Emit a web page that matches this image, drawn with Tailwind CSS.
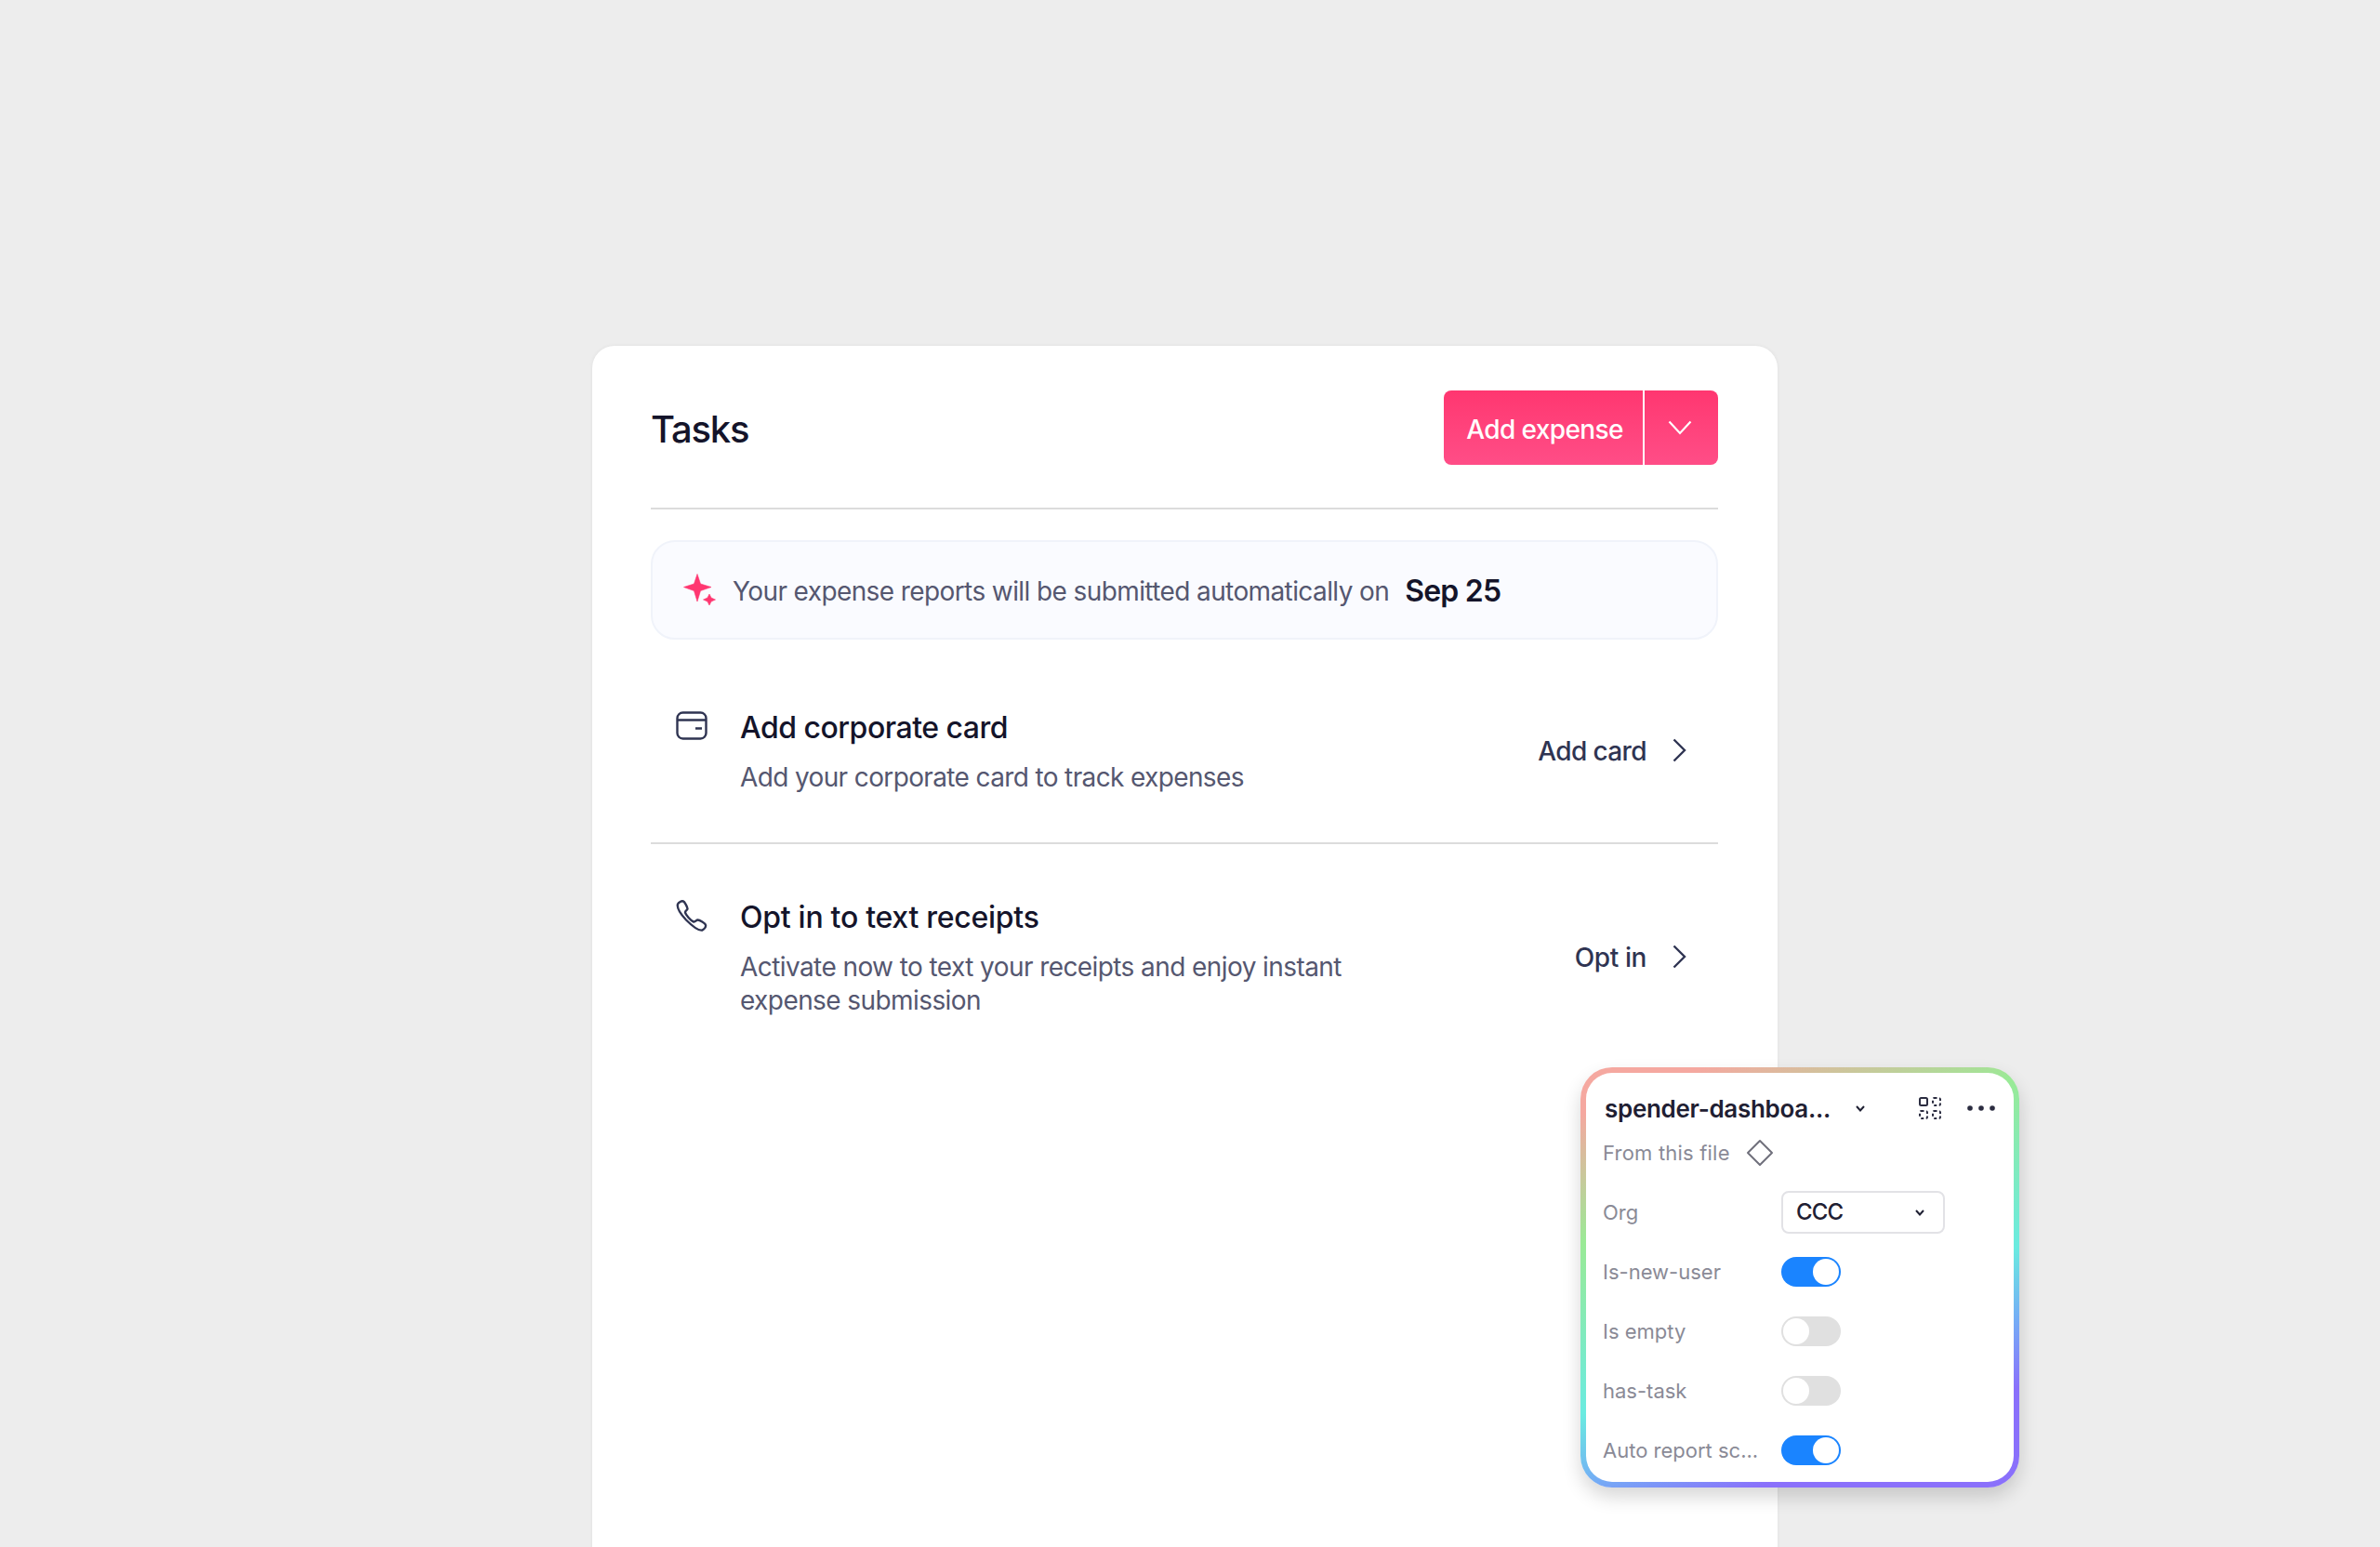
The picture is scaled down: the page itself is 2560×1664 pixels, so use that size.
<!DOCTYPE html>
<html lang="en">
  <head>
    <meta charset="UTF-8" />
    <title>Tasks</title>
    <script src="https://cdn.jsdelivr.net/npm/@tailwindcss/browser@4"></script>
  </head>
  <body class="bg-[#ededed] font-['Inter',sans-serif]">
    <div class="relative h-[1664px] w-[2560px] overflow-hidden pt-[372px]">
      <!-- Task card -->
      <div class="ml-[637px] h-[1400px] w-[1275px] rounded-[24px] bg-white pt-[48px] pr-[64px] pl-[63px] shadow-[0_0_4px_rgba(0,0,0,0.06)]">
        <!-- Header -->
        <div class="flex h-[80px] items-center justify-between">
          <h1 class="pt-[3px] text-[40px] leading-[48px] font-medium tracking-[-1.2px] text-[#14142a]">Tasks</h1>
          <div class="flex h-[80px] w-[295px] overflow-hidden rounded-[8px] bg-gradient-to-b from-[#ff3670] to-[#ff4d87] text-white">
            <div class="flex w-[214px] items-center justify-center pt-[4px] pl-[3px] text-[28px] font-medium tracking-[-0.6px]">Add expense</div>
            <div class="w-[2px] bg-white"></div>
            <div class="flex flex-1 items-center justify-center pr-[4px]">
              <svg width="26" height="16" viewBox="0 0 26 16" fill="none" stroke="currentColor" stroke-width="2.2"><path d="M1.500 1.500 13 14 24.500 1.500" /></svg>
            </div>
          </div>
        </div>
        <div class="mt-[46px] h-[2px] bg-[#dcdcdc]"></div>
        <!-- Auto submit banner -->
        <div class="mt-[33px] flex h-[107px] items-center rounded-[26px] border-2 border-[#f0f3fa] bg-[#fafbff] pl-[33px]">
          <svg class="shrink-0" width="36" height="36" viewBox="0 0 36 36" fill="#ff3670" stroke="#ff3670" stroke-width="0.6" stroke-linejoin="round">
            <path d="M15 .5 18.500 11 30 14.500 18.500 18.500 15 30 11.500 18.500 .5 14.500 11.500 11Z" />
            <path d="M28 22 30 26 34.500 28 30 30 28 34 26 30 21.500 28 26 26Z" />
          </svg>
          <span class="ml-[17px] pt-[2px] text-[28px] tracking-[-0.6px] text-[#555770]">Your expense reports will be submitted automatically on</span>
          <span class="ml-[17px] pt-[2px] text-[32px] font-semibold tracking-[-0.8px] text-[#14142a]">Sep 25</span>
        </div>
        <!-- Add corporate card -->
        <div class="mt-[75px] flex items-start pr-[34px] pl-[27px]">
          <svg class="mt-[2px] shrink-0" width="34" height="32" viewBox="0 0 34 32" fill="none" stroke="#2f3452" stroke-width="2.4">
            <rect x="1.500" y="1.500" width="31" height="28" rx="6" />
            <path d="M2 9.500H32M21 18.500H28" />
          </svg>
          <div class="ml-[35px] flex-1">
            <div class="text-[32px] leading-[40px] font-medium tracking-[-0.5px] text-[#14142a]">Add corporate card</div>
            <div class="mt-[15px] text-[28px] leading-[36px] tracking-[-0.63px] text-[#555770]">Add your corporate card to track expenses</div>
          </div>
          <div class="mt-[27px] flex items-center text-[28px] leading-[36px] font-medium tracking-[-0.6px] text-[#2f3452]">
            Add card
            <svg class="mb-[3px] ml-[28px]" width="15" height="26" viewBox="0 0 15 26" fill="none" stroke="currentColor" stroke-width="2.4"><path d="M1.500 1.500 13 13 1.500 24.500" /></svg>
          </div>
        </div>
        <div class="mt-[52px] h-[2px] bg-[#dcdcdc]"></div>
        <!-- Opt in to text receipts -->
        <div class="mt-[59px] flex items-start pr-[34px] pl-[27px]">
          <svg class="mt-[1px] shrink-0" width="34" height="34" viewBox="0 0 34 34" fill="none" stroke="#2f3452" stroke-width="2.400" stroke-linejoin="round">
            <path d="M2 4.500 C3 2.500 6 .8 8 1.500 C9.500 2 12.500 8 12.500 9.500 C12.500 11 10 11.500 10 13.500 C10.500 16 16 22.500 19 23.500 C21 24 22 21.500 23.500 21.500 C25.500 21.500 31.500 25 32 27 C32.500 29 30.500 31.500 28.500 32.500 C25 33.500 18.500 29 11 21.500 C5 15 .8 8.500 2 4.500Z" />
          </svg>
          <div class="ml-[35px] flex-1">
            <div class="text-[32px] leading-[40px] font-medium tracking-[-0.28px] text-[#14142a]">Opt in to text receipts</div>
            <div class="mt-[15px] w-[680px] text-[28px] leading-[36px] tracking-[-0.58px] text-[#555770]">Activate now to text your receipts and enjoy instant expense submission</div>
          </div>
          <div class="mt-[45px] flex items-center text-[28px] leading-[36px] font-medium tracking-[-0.4px] text-[#2f3452]">
            Opt in
            <svg class="mb-[2px] ml-[28px]" width="15" height="26" viewBox="0 0 15 26" fill="none" stroke="currentColor" stroke-width="2.4"><path d="M1.500 1.500 13 13 1.500 24.500" /></svg>
          </div>
        </div>
      </div>

      <!-- Floating variables panel -->
      <div class="absolute top-[1148px] left-[1700px] h-[452px] w-[472px] rounded-[34px] bg-[linear-gradient(159deg,#f5a8a0_8%,#9aea96_30%,#6aebe0_59%,#74aef5_71%,#8a70fb_83%)] p-[6px] shadow-[0_10px_20px_rgba(0,0,0,0.16)]">
        <div class="h-full rounded-[28px] bg-white pt-[22px] pl-[18px] text-[22px] text-[#8a8a96]">
          <div class="flex h-[32px] items-center">
            <span class="ml-[2px] w-[245px] text-[26px] font-semibold tracking-[-0.3px] whitespace-nowrap text-[#1f2033]">spender-dashboa...</span>
            <svg class="ml-[25px]" width="10" height="7" viewBox="0 0 10 7" fill="none" stroke="#1f2033" stroke-width="2"><path d="M1 1 5 5.500 9 1" /></svg>
            <svg class="ml-[58px]" width="24" height="24" viewBox="0 0 24 24" fill="none" stroke="#2b2c40" stroke-width="2">
              <rect x="1" y="1" width="8" height="8" rx="1.500" />
              <rect x="15" y="1" width="8" height="8" rx="1.500" stroke-dasharray="3 2.500" />
              <rect x="1" y="15" width="8" height="8" rx="1.500" stroke-dasharray="3 2.500" />
              <rect x="15" y="15" width="8" height="8" rx="1.500" stroke-dasharray="3 2.500" />
            </svg>
            <svg class="ml-[28px]" width="30" height="6" viewBox="0 0 30 6" fill="#2b2c40"><circle cx="3" cy="3" r="2.800" /><circle cx="15" cy="3" r="2.800" /><circle cx="27" cy="3" r="2.800" /></svg>
          </div>
          <div class="mt-[16px] flex h-[32px] items-center">
            <span class="tracking-[0.2px]">From this file</span>
            <svg class="ml-[17px]" width="30" height="30" viewBox="0 0 30 30" fill="none" stroke="#70707c" stroke-width="2" stroke-linejoin="round"><path d="M15 2 28 15 15 28 2 15Z" /></svg>
          </div>
          <!-- Variable rows -->
          <div class="mt-[25px] flex h-[46px] items-center">
            <span class="w-[192px]">Org</span>
            <div class="flex h-[46px] w-[176px] items-center justify-between rounded-[8px] border-2 border-[#e2e2e6] pr-[20px] pl-[14px] text-[24px] font-medium tracking-[-0.8px] text-[#1f2033]">
              CCC
              <svg width="10" height="7" viewBox="0 0 10 7" fill="none" stroke="#1f2033" stroke-width="2"><path d="M1 1 5 5.500 9 1" /></svg>
            </div>
          </div>
          <div class="mt-[25px] flex h-[32px] items-center">
            <span class="w-[192px]">Is-new-user</span>
            <div class="flex h-[32px] w-[64px] items-center justify-end rounded-full bg-[#1a84ff] pr-[2px]"><div class="size-[28px] rounded-full bg-white"></div></div>
          </div>
          <div class="mt-[32px] flex h-[32px] items-center">
            <span class="w-[192px]">Is empty</span>
            <div class="flex h-[32px] w-[64px] items-center rounded-full bg-[#e0e0e0] pl-[2px]"><div class="size-[28px] rounded-full bg-white"></div></div>
          </div>
          <div class="mt-[32px] flex h-[32px] items-center">
            <span class="w-[192px]">has-task</span>
            <div class="flex h-[32px] w-[64px] items-center rounded-full bg-[#e0e0e0] pl-[2px]"><div class="size-[28px] rounded-full bg-white"></div></div>
          </div>
          <div class="mt-[32px] flex h-[32px] items-center">
            <span class="w-[192px] whitespace-nowrap">Auto report sc...</span>
            <div class="flex h-[32px] w-[64px] items-center justify-end rounded-full bg-[#1a84ff] pr-[2px]"><div class="size-[28px] rounded-full bg-white"></div></div>
          </div>
        </div>
      </div>
    </div>
  </body>
</html>
